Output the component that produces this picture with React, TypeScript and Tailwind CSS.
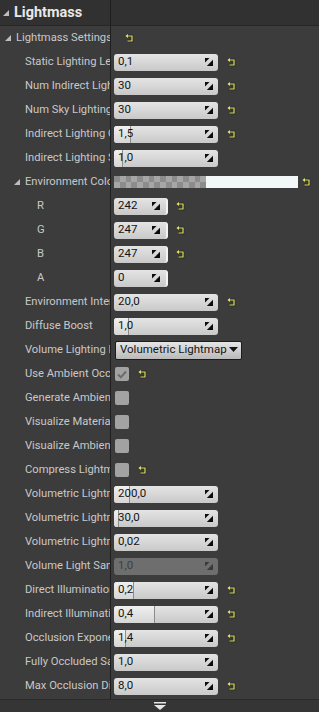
import React from "react";

type Row =
  | { kind: "num"; label: string; value: string; fill?: number; reset?: boolean; indent?: number; disabled?: boolean }
  | { kind: "rgb"; label: string; value: string; reset?: boolean }
  | { kind: "check"; label: string; checked?: boolean; reset?: boolean }
  | { kind: "color"; label: string }
  | { kind: "select"; label: string; value: string }
  | { kind: "group"; label: string };

const rows: Row[] = [
  { kind: "group", label: "Lightmass Settings" },
  { kind: "num", label: "Static Lighting Level Scale", value: "0,1", reset: true },
  { kind: "num", label: "Num Indirect Lighting Bounces", value: "30", reset: true },
  { kind: "num", label: "Num Sky Lighting Bounces", value: "30", reset: true },
  { kind: "num", label: "Indirect Lighting Quality", value: "1,5", fill: 17, reset: true },
  { kind: "num", label: "Indirect Lighting Smoothness", value: "1,0", fill: 9 },
  { kind: "color", label: "Environment Color" },
  { kind: "rgb", label: "R", value: "242", reset: true },
  { kind: "rgb", label: "G", value: "247", reset: true },
  { kind: "rgb", label: "B", value: "247", reset: true },
  { kind: "rgb", label: "A", value: "0" },
  { kind: "num", label: "Environment Intensity", value: "20,0", reset: true },
  { kind: "num", label: "Diffuse Boost", value: "1,0", fill: 15 },
  { kind: "select", label: "Volume Lighting Method", value: "Volumetric Lightmap" },
  { kind: "check", label: "Use Ambient Occlusion", checked: true, reset: true },
  { kind: "check", label: "Generate Ambient Occlusion Material Mask" },
  { kind: "check", label: "Visualize Material Diffuse" },
  { kind: "check", label: "Visualize Ambient Occlusion" },
  { kind: "check", label: "Compress Lightmaps", reset: true },
  { kind: "num", label: "Volumetric Lightmap Detail Cell Size", value: "200,0", fill: 16 },
  { kind: "num", label: "Volumetric Lightmap Maximum Brick Memory Mb", value: "30,0", fill: 5 },
  { kind: "num", label: "Volumetric Lightmap Spherical Harmonic Smoothing", value: "0,02" },
  { kind: "num", label: "Volume Light Sample Placement Scale", value: "1,0", disabled: true },
  { kind: "num", label: "Direct Illumination Occlusion Fraction", value: "0,2", fill: 20, reset: true },
  { kind: "num", label: "Indirect Illumination Occlusion Fraction", value: "0,4", fill: 41, reset: true },
  { kind: "num", label: "Occlusion Exponent", value: "1,4", fill: 12, reset: true },
  { kind: "num", label: "Fully Occluded Samples Fraction", value: "1,0" },
  { kind: "num", label: "Max Occlusion Distance", value: "8,0", reset: true },
];

function ResetArrow() {
  return (
    <svg width="9" height="9" viewBox="0 0 9 9" className="shrink-0">
      <path d="M2 2 H7 V7 H2.5" fill="none" stroke="#1e1e14" strokeWidth="2.4" />
      <path d="M2 2 H7 V7 H2.5" fill="none" stroke="#e4e46a" strokeWidth="1.2" />
      <path d="M0.5 2 L3 0 L3 4 Z" fill="#e4e46a" />
    </svg>
  );
}

function SpinIcon({ dim }: { dim?: boolean }) {
  const c = dim ? "#3a3a3a" : "#0c0c0c";
  return (
    <svg width="8" height="8" viewBox="0 0 8 8" className="shrink-0">
      <polygon points="0,0 4.5,0 0,4.5" fill={c} />
      <polygon points="8,8 8,1.8 1.8,8" fill={c} />
    </svg>
  );
}

function Triangle() {
  return (
    <svg width="6" height="6" viewBox="0 0 6 6" className="shrink-0">
      <polygon points="6,0 6,6 0,6" fill="#bdbdbd" />
    </svg>
  );
}

function NumBox({ value, fill, wide = true, disabled }: { value: string; fill?: number; wide?: boolean; disabled?: boolean }) {
  return (
    <div
      className={`relative h-[17px] rounded-[3px] overflow-hidden flex items-center ${wide ? "w-[104px]" : "w-[54px] border-r-2 border-[#f4f4f4]"} ${
        disabled ? "bg-[#6e6e6e]" : "bg-gradient-to-b from-[#e4e4e4] to-[#c9c9c9]"
      }`}
    >
      {fill ? (
        <div
          className="absolute left-0 top-0 bottom-0 bg-gradient-to-b from-[#f0f0f0] to-[#d6d6d6] border-r border-[#8c8c8c]"
          style={{ width: fill }}
        />
      ) : null}
      <span className={`relative pl-[4px] text-[11.5px] ${disabled ? "text-[#3e3e3e]" : "text-[#141414]"}`}>{value}</span>
      <div className={`absolute top-[4px] ${wide ? "right-[5px]" : "right-[6px]"}`}>
        <SpinIcon dim={disabled} />
      </div>
    </div>
  );
}

function Checker() {
  const cells = [];
  for (let r = 0; r < 2; r++) {
    for (let c = 0; c < 16; c++) {
      cells.push(
        <div key={`${r}-${c}`} className={(r + c) % 2 === 0 ? "bg-[#8c8c8c]" : "bg-[#a6a6a6]"} />
      );
    }
  }
  return <div className="grid grid-cols-[repeat(16,1fr)] grid-rows-2 w-[92px] h-[12px]">{cells}</div>;
}

function Value({ row }: { row: Row }) {
  switch (row.kind) {
    case "group":
      return (
        <div className="pl-[11px]">
          <ResetArrow />
        </div>
      );
    case "num":
      return (
        <div className="flex items-center gap-[9px]">
          <NumBox value={row.value} fill={row.fill} disabled={row.disabled} />
          {row.reset && <ResetArrow />}
        </div>
      );
    case "rgb":
      return (
        <div className="flex items-center gap-[8px]">
          <NumBox value={row.value} wide={false} />
          {row.reset && <ResetArrow />}
        </div>
      );
    case "color":
      return (
        <div className="flex items-center gap-[4px]">
          <div className="flex">
            <Checker />
            <div className="w-[92px] h-[12px] bg-[#f2f7f7]" />
          </div>
          <ResetArrow />
        </div>
      );
    case "select":
      return (
        <div className="h-[19px] w-[127px] ml-[1px] rounded-[2px] border border-[#1c1c1c] bg-gradient-to-b from-[#e6e6e6] to-[#b9b9b9] flex items-center pl-[4px] pr-[3px] justify-between whitespace-nowrap">
          <span className="text-[11.5px] text-[#141414]">{row.value}</span>
          <svg width="9" height="6" viewBox="0 0 9 6" className="shrink-0">
            <polygon points="0,0 9,0 4.5,5" fill="#141414" />
          </svg>
        </div>
      );
    case "check":
      return (
        <div className="flex items-center gap-[9px] pl-[1px]">
          <div className="w-[14px] h-[14px] rounded-[2px] bg-[#a2a2a2] flex items-center justify-center">
            {row.checked && (
              <svg width="10" height="9" viewBox="0 0 10 9">
                <path d="M1 4.5 L3.8 7.3 L9 1.5" fill="none" stroke="#6c6c6c" strokeWidth="2" />
              </svg>
            )}
          </div>
          {row.reset && <ResetArrow />}
        </div>
      );
  }
}

function labelPad(row: Row) {
  if (row.kind === "group") return "pl-[5px]";
  if (row.kind === "color") return "pl-[14px]";
  if (row.kind === "rgb") return "pl-[37px]";
  return "pl-[25px]";
}

export default function App() {
  return (
    <div className="w-[319px] h-[712px] bg-[#3c3c3c] flex flex-col overflow-hidden" style={{ fontFamily: "Roboto, 'Liberation Sans', sans-serif" }}>
      {/* Category header */}
      <div className="h-[26px] flex bg-[#313131] border-b border-[#262626] shrink-0">
        <div className="w-[111px] flex items-center gap-[5px] pl-[3px] border-r border-[#1e1e1e]">
          <Triangle />
          <span className="text-[14.5px] font-bold text-[#e8e8e8]">Lightmass</span>
        </div>
        <div className="flex-1" />
      </div>

      {/* Properties */}
      <div className="flex-1 flex flex-col">
        {rows.map((row, i) => (
          <div key={i} className="h-[24px] flex items-center shrink-0">
            <div className={`w-[111px] h-full flex items-center gap-[5px] overflow-hidden whitespace-nowrap border-r border-[#1e1e1e] ${labelPad(row)}`}>
              {(row.kind === "group" || row.kind === "color") && <Triangle />}
              <span className="text-[11.2px] text-[#c8c8c8]">{row.label}</span>
            </div>
            <div className="flex-1 pl-[3px] flex items-center">
              <Value row={row} />
            </div>
          </div>
        ))}
        <div className="flex-1 flex">
          <div className="w-[111px] border-r border-[#1e1e1e]" />
        </div>
      </div>

      {/* Scroll hint */}
      <div className="h-[13px] bg-[#353535] border-t border-[#2a2a2a] flex justify-center items-start pt-[2px] shrink-0">
        <svg width="12" height="8" viewBox="0 0 12 8">
          <rect x="0" y="0" width="12" height="1.5" fill="#e6e6e6" />
          <polygon points="0,3 12,3 6,8" fill="#e6e6e6" />
        </svg>
      </div>
    </div>
  );
}
